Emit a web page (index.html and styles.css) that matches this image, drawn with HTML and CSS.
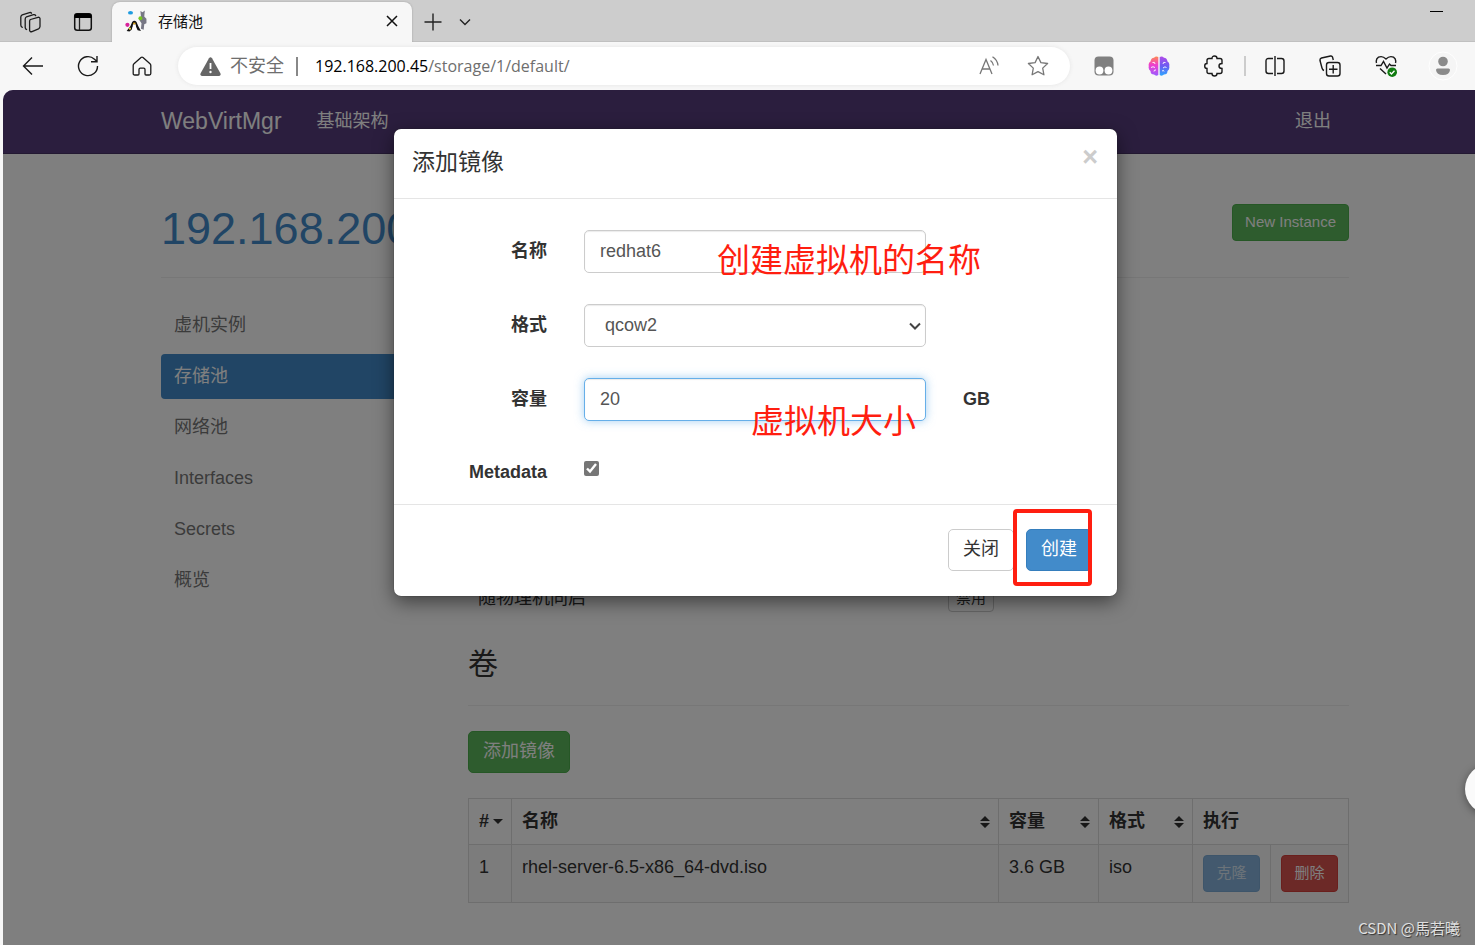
FILE: index.html
```html
<!DOCTYPE html>
<html lang="zh-CN">
<head>
<meta charset="utf-8">
<title>存储池</title>
<link rel="stylesheet" href="styles.css">
</head>
<body>
<div class="browser">
  <div class="tabstrip">
    <button class="icon-btn strip-btn" aria-label="工作区">
      <svg width="24" height="24" viewBox="0 0 24 24" fill="none" stroke="#1c1c1c" stroke-width="1.3" stroke-linejoin="round" stroke-linecap="round"><path d="M12.5 9.5 L20 7.3 Q21.8 7 22 8.6 V16.5 Q21.8 18.2 20.5 18.8 L14 21.6 Q12 22.2 11.6 20.4 V11.2 Q11.6 9.9 12.5 9.500Z"/><path d="M8.600 19.500 Q7.200 19 7.200 17.500 V9 Q7.200 7.500 8.500 6.800 L15.500 4.700 Q17 4.300 17.700 5.600"/><path d="M4.300 17.300 Q2.800 16.700 2.800 15 V7 Q2.800 5.500 4.200 4.800 L11.500 2.600 Q12.800 2.200 13.500 3.200"/></svg>
    </button>
    <button class="icon-btn strip-btn" aria-label="标签页操作">
      <svg width="20" height="20" viewBox="0 0 20 20"><rect x="1.700" y="1.700" width="16.600" height="16.600" rx="2.500" fill="none" stroke="#111" stroke-width="1.500"/><path d="M1.500 6V4A2.500 2.500 0 0 1 4 1.500H16A2.500 2.500 0 0 1 18.500 4V6Z" fill="#000"/><path d="M6.500 6V18" stroke="#222" stroke-width="1.300"/></svg>
    </button>
    <div class="tab">
      <svg class="favicon" width="22" height="22" viewBox="0 0 20 20"><path d="M14 1L16 2L18 .500L17.500 6L19.500 8V12L17.500 13L17 18L14.500 17L15 12L13 9L14.500 6Z" fill="#777784"/><ellipse cx="5" cy="2.500" rx="2.300" ry="1.700" fill="#1e9be0"/><circle cx="14" cy="7.500" r="1.800" fill="#77c41f"/><path d="M1.500 19L5 14.500L6.500 11Q8.500 8.500 10.500 11L12 14.500L14.500 19L11.500 18.500L10 15.500H7L6 18L4 19.500Z" fill="#111"/><path d="M7.300 13H9.700L10.500 18H6.500Z" fill="#fff"/><circle cx="2.200" cy="13.500" r="1.900" fill="#d8229a"/><path d="M7.500 11.500H9.500V13H7.500Z" fill="#f0b41d"/><circle cx="4.500" cy="17" r="1" fill="#e8cf38"/></svg>
      <span class="tab-title">存储池</span>
      <button class="icon-btn" aria-label="关闭标签页"><svg width="12" height="12" viewBox="0 0 12 12"><path d="M1 1L11 11M11 1L1 11" stroke="#111" stroke-width="1.500"/></svg></button>
    </div>
    <button class="icon-btn" aria-label="新建标签页"><svg width="18" height="18" viewBox="0 0 18 18"><path d="M9 .500V17.500M.500 9H17.500" stroke="#222" stroke-width="1.400"/></svg></button>
    <button class="icon-btn" aria-label="标签列表"><svg width="12" height="8" viewBox="0 0 12 8"><path d="M1 1.500L6 6.500L11 1.500" fill="none" stroke="#222" stroke-width="1.400"/></svg></button>
    <button class="icon-btn minimize" aria-label="最小化"><svg width="13" height="1" viewBox="0 0 13 1"><path d="M0 0H13V1H0Z" fill="#000"/></svg></button>
  </div>
  <div class="toolbar">
    <div class="nav-buttons">
      <button class="icon-btn" aria-label="后退"><svg width="22" height="20" viewBox="0 0 22 20"><path d="M21 10H1.500M10 1.500L1.500 10L10 18.500" fill="none" stroke="#1a1a1a" stroke-width="1.400"/></svg></button>
      <button class="icon-btn" aria-label="刷新"><svg width="22" height="22" viewBox="0 0 22 22"><path d="M20.500 11A9.500 9.500 0 1 1 17.500 4.200L20 6.500M20 1V6.800H14" fill="none" stroke="#1a1a1a" stroke-width="1.400"/></svg></button>
      <button class="icon-btn" aria-label="主页"><svg width="20" height="20" viewBox="0 0 20 20"><path d="M2 7.800L9 1.500Q10 .700 11 1.500L18 7.800Q18.800 8.500 18.800 9.500V17.500Q18.800 19 17.300 19H14Q13 19 13 18V13.500Q13 12.200 11.700 12.200H8.300Q7 12.200 7 13.500V18Q7 19 6 19H2.700Q1.200 19 1.200 17.500V9.500Q1.200 8.500 2 7.800Z" fill="none" stroke="#1a1a1a" stroke-width="1.300"/></svg></button>
    </div>
    <div class="address">
      <svg width="21" height="19" viewBox="0 0 21 19"><path d="M9 1.200Q10.500-.600 12 1.200L20.500 16.500Q21 18.600 19 19H2Q0 18.600 .500 16.500Z" fill="#666"/><path d="M10.500 6V12" stroke="#fff" stroke-width="1.800"/><circle cx="10.500" cy="15" r="1.200" fill="#fff"/></svg>
      <span class="insecure">不安全</span>
      <span class="address-sep"></span>
      <span class="url"><b>192.168.200.45</b>/storage/1/default/</span>
      <button class="icon-btn" aria-label="大声朗读"><svg width="20" height="20" viewBox="0 0 20 20" fill="none" stroke="#777" stroke-width="1.300"><path d="M1 18L7 3.500L13 18M3.200 13H10.800M11.500 4.500Q14.200 6.500 14.500 9.500M13.500 .800Q18.500 4 19 9.500"/></svg></button>
      <button class="icon-btn" aria-label="收藏"><svg width="22" height="22" viewBox="0 0 22 22"><path d="M11 1.500L13.900 7.600L20.600 8.500L15.700 13.100L16.900 19.800L11 16.600L5.100 19.800L6.300 13.100L1.400 8.500L8.100 7.600Z" fill="none" stroke="#777" stroke-width="1.300" stroke-linejoin="round"/></svg></button>
    </div>
    <div class="extensions">
      <button class="icon-btn" aria-label="扩展"><svg width="20" height="20" viewBox="0 0 20 20"><rect x=".500" y=".500" width="19" height="19" rx="4" fill="#808080"/><circle cx="5.500" cy="14.500" r="3.900" fill="#fff"/><circle cx="14.500" cy="14.500" r="3.900" fill="#fff"/></svg></button>
      <button class="icon-btn" aria-label="智能助手"><svg width="22" height="20" viewBox="0 0 22 20"><defs><linearGradient id="pink" x2="0" y2="1"><stop stop-color="#ff8a50"/><stop offset=".45" stop-color="#ee3ed0"/><stop offset="1" stop-color="#9a5cff"/></linearGradient><linearGradient id="blue" x2="0" y2="1"><stop stop-color="#b24ce9"/><stop offset=".5" stop-color="#6b5cf2"/><stop offset="1" stop-color="#2fa6ff"/></linearGradient></defs><path d="M10.300 1V19Q8 20.500 6 18.500Q2.500 18.500 2.500 15Q0 13.500 .800 10Q0 7 2.500 5.500Q3 2 6 1.800Q8-.500 10.300 1Z" fill="url(#pink)"/><path d="M11.700 1V19Q14 20.500 16 18.500Q19.500 18.500 19.500 15Q22 13.500 21.200 10Q22 7 19.500 5.500Q19 2 16 1.800Q14-.500 11.700 1Z" fill="url(#blue)"/><path d="M4.500 6.500Q7 5.500 7 8M3 11.500Q5 10 7 11.500M6 15.500Q6 13.500 8 14M17.500 6.500Q15 5.500 15 8M18.500 11.500Q17 10 15 12M16 15.500Q16 13.500 14 15" fill="none" stroke="#fff" stroke-width=".9"/></svg></button>
      <button class="icon-btn" aria-label="扩展管理"><svg width="20" height="22" viewBox="0 0 20 22"><path d="M5 3.500H8Q8 1 10.500 1T13 3.500H16Q18 3.500 18 5.500V8.500Q15 8.500 15 11T18 13.500V16.500Q18 18.500 16 18.500H13Q13 21 10.500 21T8 18.500H5Q3 18.500 3 16.500V13.500Q.700 13.500 .700 11T3 8.500V5.500Q3 3.500 5 3.500Z" fill="none" stroke="#1a1a1a" stroke-width="1.400"/></svg></button>
      <span class="ext-sep"></span>
      <button class="icon-btn" aria-label="分屏"><svg width="20" height="20" viewBox="0 0 20 20"><path d="M8 2.500H3.500Q1 2.500 1 5V15Q1 17.500 3.500 17.500H8M12 2.500H16.500Q19 2.500 19 5V15Q19 17.500 16.500 17.500H12M10 0V20" fill="none" stroke="#1a1a1a" stroke-width="1.400"/></svg></button>
      <button class="icon-btn" aria-label="集锦"><svg width="22" height="22" viewBox="0 0 22 22" fill="none" stroke="#1a1a1a" stroke-width="1.400"><rect x="7.500" y="7.500" width="13.500" height="13.500" rx="2.500"/><path d="M14.200 10V18.500M10 14.200H18.500M5 15.500Q3.500 15 3 13L1 5.500Q.700 3.500 2.500 3L11.500 1Q13 .700 13.500 2L14.300 5"/></svg></button>
      <button class="icon-btn" aria-label="浏览器概要"><svg width="22" height="22" viewBox="0 0 22 22"><path d="M1.500 8Q.500 4 3.500 2.200Q7.500 .500 11 4Q14.500 .500 18.500 2.200Q21.500 4 20.500 8M1 10.500H6L8.500 6.500L12 13L14.500 9L16 10.500H21M5 13.500L11 19" fill="none" stroke="#1a1a1a" stroke-width="1.400"/><circle cx="17.200" cy="17.200" r="4.800" fill="#107c10"/><path d="M14.800 17.200L16.500 19L19.500 15.700" fill="none" stroke="#fff" stroke-width="1.300"/></svg></button>
      <button class="icon-btn profile" aria-label="个人资料"><svg width="30" height="30" viewBox="0 0 30 30"><circle cx="15" cy="15" r="14" fill="#f5f5f5" stroke="#fff" stroke-width="1"/><circle cx="15" cy="10.500" r="4.800" fill="#8a8a8a"/><path d="M9.500 17.500H20.500Q22 17.500 22 19Q21.500 24 15 24T8 19Q8 17.500 9.500 17.500Z" fill="#8a8a8a"/></svg></button>
    </div>
  </div>
</div>

<div class="viewport">
  <nav class="navbar">
    <a class="brand" href="#">WebVirtMgr</a>
    <a class="nav-link" href="#">基础架构</a>
    <a class="nav-link logout" href="#">退出</a>
  </nav>
  <main class="page">
    <header class="page-header">
      <h1><a href="#">192.168.200.45</a></h1>
      <button class="btn btn-small btn-success">New Instance</button>
    </header>
    <div class="columns">
      <ul class="side-nav">
        <li><a href="#">虚机实例</a></li>
        <li><a class="active" href="#">存储池</a></li>
        <li><a href="#">网络池</a></li>
        <li><a href="#">Interfaces</a></li>
        <li><a href="#">Secrets</a></li>
        <li><a href="#">概览</a></li>
      </ul>
      <section class="storage">
        <div class="autostart">
          <span>随物理机同启</span>
          <button class="btn btn-tiny btn-default">禁用</button>
        </div>
        <h2>卷</h2>
        <button class="btn btn-success">添加镜像</button>
        <table class="volumes">
          <colgroup><col class="c-num"><col><col class="c-size"><col class="c-format"><col class="c-action"><col class="c-action"></colgroup>
          <thead>
            <tr>
              <th><span class="th first"># <svg width="10" height="5" viewBox="0 0 10 5"><path d="M0 0H10L5 5Z"/></svg></span></th>
              <th><span class="th">名称 <svg width="10" height="12" viewBox="0 0 10 12"><path d="M0 5L5 0L10 5ZM0 7H10L5 12Z"/></svg></span></th>
              <th><span class="th">容量 <svg width="10" height="12" viewBox="0 0 10 12"><path d="M0 5L5 0L10 5ZM0 7H10L5 12Z"/></svg></span></th>
              <th><span class="th">格式 <svg width="10" height="12" viewBox="0 0 10 12"><path d="M0 5L5 0L10 5ZM0 7H10L5 12Z"/></svg></span></th>
              <th colspan="2">执行</th>
            </tr>
          </thead>
          <tbody>
            <tr>
              <td>1</td><td>rhel-server-6.5-x86_64-dvd.iso</td><td>3.6 GB</td><td>iso</td>
              <td><button class="btn btn-small btn-clone">克隆</button></td>
              <td><button class="btn btn-small btn-danger">删除</button></td>
            </tr>
          </tbody>
        </table>
      </section>
    </div>
  </main>

  <div class="backdrop">
    <form class="modal" role="dialog" aria-labelledby="modal-title">
      <div class="modal-header">
        <h3 id="modal-title">添加镜像</h3>
        <button class="close" type="button" aria-label="关闭">×</button>
      </div>
      <div class="modal-body">
        <label for="name">名称</label>
        <input class="control" id="name" type="text" value="redhat6">
        <label class="row-start" for="format">格式</label>
        <div class="select-wrap">
          <select class="control" id="format"><option>qcow2</option></select>
          <svg class="chevron" width="12" height="8" viewBox="0 0 12 8"><path d="M1 1.500L6 6.500L11 1.500" fill="none" stroke="#444" stroke-width="2"/></svg>
        </div>
        <label class="row-start" for="size">容量</label>
        <input class="control focused" id="size" type="text" value="20">
        <span class="unit">GB</span>
        <label class="row-start check-label" for="metadata">Metadata</label>
        <input class="check" id="metadata" type="checkbox" checked>
      </div>
      <div class="modal-footer">
        <button class="btn btn-default" type="button">关闭</button>
        <button class="btn btn-primary" type="button">创建</button>
      </div>
      <span class="note note-name">创建虚拟机的名称</span>
      <span class="note note-size">虚拟机大小</span>
      <span class="note-box"></span>
    </form>
  </div>
  <span class="side-handle"></span>
  <span class="watermark">CSDN @馬若曦</span>
</div>
</body>
</html>
```
FILE: styles.css
```css
* { box-sizing: border-box; }

body {
  margin: 0;
  min-height: 100vh;
  display: flex;
  flex-direction: column;
  overflow: hidden;
  background: #f7f7f7;
  color: #333;
  font: 18px/25px "Liberation Sans", "Noto Sans CJK SC", sans-serif;
}

button, input, select { font: inherit; color: inherit; }
a { text-decoration: none; }

.icon-btn {
  display: flex;
  padding: 0;
  border: 0;
  background: none;
}

/* Browser chrome */
.tabstrip {
  display: flex;
  align-items: center;
  height: 42px;
  padding: 2px 32px 0 18px;
  background: #cdcdcd;
  border-bottom: 1px solid #c0c0c0;
}
.strip-btn { width: 24px; margin-right: 29px; justify-content: center; }
.strip-btn + .strip-btn { margin-right: 17px; }
.tab {
  display: flex;
  align-items: center;
  align-self: stretch;
  width: 300px;
  margin: 0 12px -1px 0;
  padding: 0 14px 2px 13px;
  border-radius: 8px 8px 0 0;
  background: #f7f7f7;
  box-shadow: 0 0 2px #999;
  clip-path: inset(-3px -3px 0 -3px);
}
.tab-title { flex: 1; margin-left: 11px; font-size: 15px; color: #111; }
.tab + .icon-btn { margin-right: 17px; }
.tab .icon-btn { margin-right: 0; }
.minimize { margin: 0 0 20px auto; }

.toolbar {
  display: flex;
  align-items: center;
  height: 48px;
  padding: 0 17px 0 22px;
  background: #f7f7f7;
}
.nav-buttons { display: flex; align-items: center; gap: 33px; width: 156px; }
.address {
  display: flex;
  align-items: center;
  flex: 1;
  height: 38px;
  padding: 0 21px 0 22px;
  border-radius: 19px;
  background: #fff;
  box-shadow: 0 0 4px #e4e4e4;
  color: #6e6e6e;
}
.insecure { margin: 0 12px 0 9px; }
.address-sep { width: 2px; height: 19px; margin-right: 17px; background: #888; }
.url { flex: 1; font-family: "Open Sans", sans-serif; font-size: 16px; }
.url b { font-weight: 400; color: #000; }
.address .icon-btn + .icon-btn { margin-left: 28px; }
.extensions { display: flex; align-items: center; justify-content: space-between; width: 364px; margin-left: 24px; }
.ext-sep { width: 2px; height: 20px; margin: 0 -14px; background: #ccc; }
.profile { margin-left: -3px; }

/* Page */
.viewport {
  position: relative;
  flex: 1;
  margin-left: 3px;
  overflow: hidden;
  border-radius: 10px 0 0 0;
  background: #fff;
}
.navbar {
  display: flex;
  align-items: center;
  height: 64px;
  padding: 0 144px 0 158px;
  background: #563d7c;
  border-bottom: 1px solid #463265;
}
.brand { font-size: 23px; color: #fff; }
.nav-link { margin-left: 35px; color: #fff; }
.logout { margin-left: auto; }

.page { padding: 50px 126px 0 158px; }
.page-header {
  display: flex;
  justify-content: space-between;
  align-items: flex-start;
  height: 74px;
  margin-bottom: 25px;
  border-bottom: 1px solid #eee;
}
h1 { margin: 0; font-size: 45px; line-height: 50px; font-weight: 400; }
h1 a { color: #428bca; }

.btn {
  height: 42px;
  padding: 0 14px 1px;
  border: 1px solid;
  border-radius: 5px;
  white-space: nowrap;
}
.btn-small { height: 37px; padding: 0 12px 2px; font-size: 15px; border-radius: 4px; }
.btn-tiny { height: 28px; padding: 0 7px; font-size: 15px; border-radius: 4px; line-height: 24px; }
.btn-success { background: #5cb85c; border-color: #4cae4c; color: #fff; }
.btn-default { background: #fff; border-color: #ccc; color: #333; }
.btn-primary { background: #428bca; border-color: #357ebd; color: #fff; }
.btn-danger { background: #d9534f; border-color: #d43f3a; color: #fff; }
.btn-clone { background: #86b3dc; border-color: #7cabd5; color: #d8e6f3; }

.columns { display: grid; grid-template-columns: 269px 1fr; gap: 38px; }
.side-nav { display: flex; flex-direction: column; gap: 6px; margin: 0; padding: 0; list-style: none; }
.side-nav a { display: block; height: 45px; padding: 10px 13px; border-radius: 4px; color: #777; }
.side-nav .active { background: #428bca; color: #fff; }

.autostart {
  display: grid;
  grid-template-columns: 470px auto;
  justify-content: start;
  align-items: center;
  margin-top: 281px;
  padding-left: 10px;
}
h2 { margin: 31px 0 25px; padding-bottom: 20px; border-bottom: 1px solid #eee; font-size: 30px; line-height: 42px; font-weight: 400; }

.volumes { width: 100%; margin-top: 25px; border-collapse: collapse; table-layout: fixed; }
.volumes th, .volumes td { padding: 10px; border: 1px solid #ddd; text-align: left; vertical-align: top; }
.volumes td { background: #f9f9f9; height: 58px; }
.volumes .btn { display: block; width: 100%; }
.th { display: flex; justify-content: space-between; align-items: center; margin-right: -2px; }
.th svg { fill: #333; }
.c-num { width: 43px; }
.c-size { width: 100px; }
.c-format { width: 94px; }
.c-action { width: 78px; }

/* Dialog */
.backdrop {
  position: absolute;
  inset: 0;
  display: flex;
  justify-content: center;
  align-items: flex-start;
  padding: 39px 0 0 33px;
  background: rgba(0, 0, 0, .5);
}
.modal {
  position: relative;
  width: 723px;
  border-radius: 7px;
  background: #fff;
  box-shadow: 0 6px 19px rgba(0, 0, 0, .5), 0 0 1px #222;
}
.modal-header {
  display: flex;
  justify-content: space-between;
  align-items: flex-start;
  padding: 16px 19px 19px 18px;
  border-bottom: 1px solid #e5e5e5;
}
.modal-header h3 { margin: 0; font-size: 23px; line-height: 34px; font-weight: 400; }
.close { padding: 0; border: 0; background: none; color: #ccc; font-size: 27px; font-weight: 700; line-height: 24px; }
.modal-body {
  display: grid;
  grid-template-columns: 153px 342px 1fr;
  column-gap: 37px;
  row-gap: 31px;
  align-items: center;
  padding: 31px 25px 19px 0;
}
.modal-body label { text-align: right; font-weight: 700; }
.row-start { grid-column: 1; }
.unit { font-weight: 700; }
.control {
  width: 100%;
  height: 43px;
  padding: 0 15px 1px;
  border: 1px solid #ccc;
  border-radius: 5px;
  background: #fff;
  box-shadow: inset 0 1px 1px rgba(0, 0, 0, .08);
  color: #555;
}
.select-wrap { display: flex; align-items: center; }
select.control { appearance: none; padding-left: 20px; }
.chevron { flex: none; margin: 0 5px 0 -17px; }
.focused { border-color: #66afe9; box-shadow: inset 0 1px 1px rgba(0, 0, 0, .08), 0 0 10px rgba(102, 175, 233, .6); outline: 0; }
.modal-body .check-label { padding-top: 8px; }
.check { width: 15px; height: 15px; margin: 0; accent-color: #767676; }
.modal-footer {
  display: flex;
  justify-content: flex-end;
  gap: 12px;
  padding: 24px 25px 25px;
  border-top: 1px solid #e5e5e5;
}

/* Markup drawn over the dialog */
.note { position: absolute; color: #ff1e10; font-size: 33px; line-height: 44px; white-space: nowrap; }
.note-name { left: 323px; top: 110px; }
.note-size { left: 357px; top: 271px; }
.note-box { position: absolute; right: 25px; bottom: 10px; width: 79px; height: 77px; border: 4px solid #ff1e10; border-radius: 4px; }

.side-handle { position: absolute; right: -40px; top: 674px; width: 50px; height: 50px; border-radius: 25px; background: #fafafa; box-shadow: 0 2px 8px rgba(0, 0, 0, .4); }
.watermark { position: absolute; right: 15px; bottom: 5px; color: #e0e0e0; font-size: 15px; text-shadow: 1px 1px 1px #333; font-family: "Noto Sans CJK SC", sans-serif; }
```
